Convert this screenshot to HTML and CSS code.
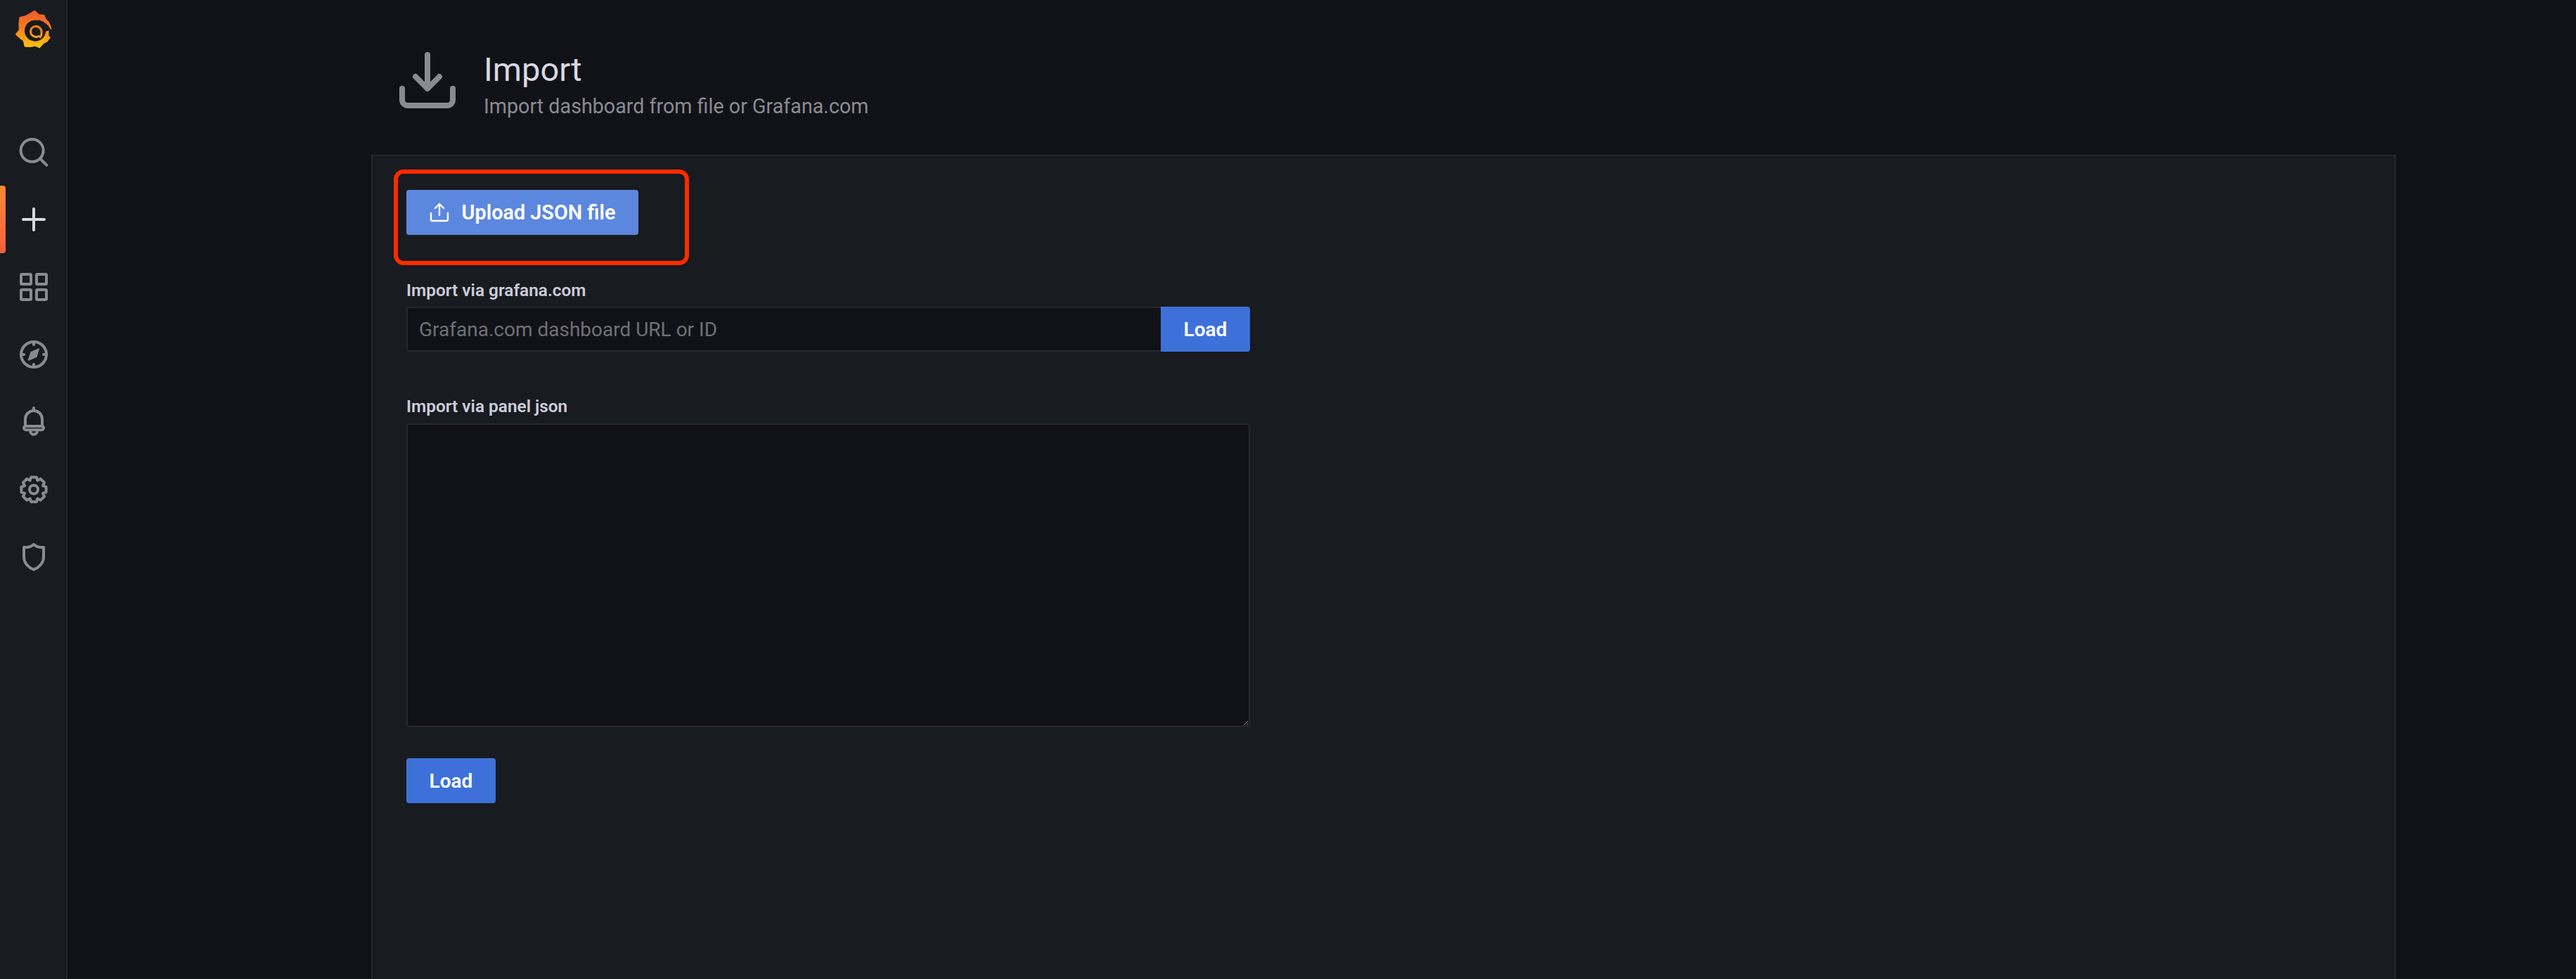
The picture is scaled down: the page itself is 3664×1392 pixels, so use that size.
FILE: index.html
```html
<!DOCTYPE html>
<html lang="en">
<head>
<meta charset="utf-8">
<title>Import</title>
<link rel="stylesheet" href="styles.css">
</head>
<body>
<div class="app">
  <nav class="sidebar">
    <a class="logo">
      <svg class="logo-svg" viewBox="0 0 270 240">
        <defs>
          <linearGradient id="lg" gradientUnits="userSpaceOnUse" x1="0" y1="43" x2="0" y2="206">
            <stop offset="0" stop-color="#f1582c"/>
            <stop offset="0.45" stop-color="#f47c20"/>
            <stop offset="1" stop-color="#fdc70c"/>
          </linearGradient>
        </defs>
        <path fill="url(#lg)" stroke="url(#lg)" stroke-width="6" stroke-linejoin="round" d="M148 47 L166 64 L187 65 L195 84 C207 92 214 106 217 124 L206 128 L205 153 L212 160 L200 176 L185 183 L168 202 L150 194 L130 198 L107 197 L101 172 L84 160 L69 146 L84 128 L82 104 L85 75 L108 70 L126 60 Z"/>
        <circle cx="150" cy="131" r="45" fill="#181b1f"/>
        <path fill="#181b1f" d="M160 85 C184 88 205 104 218 128 L192 134 L180 115 Z"/>
        <path fill="none" stroke="url(#lg)" stroke-width="9" stroke-linecap="round" d="M165 155 C148 162 129 150 131 132 C133 114 155 106 169 118 C180 128 180 146 172 158"/>
      </svg>
    </a>
    <div class="nav-items">
      <a class="nav-item">
        <svg class="icon" viewBox="0 0 24 24"><circle cx="10.8" cy="11" r="8"/><path d="M16.8 17 L21.2 21.4"/></svg>
      </a>
      <a class="nav-item active">
        <svg class="icon icon-light" viewBox="0 0 24 24"><path d="M12 4.5 V19.5 M4.5 12 H19.5"/></svg>
      </a>
      <a class="nav-item">
        <svg class="icon" viewBox="0 0 24 24"><rect x="3" y="3" width="7" height="7" rx="0.6"/><rect x="14" y="3" width="7" height="7" rx="0.6"/><rect x="3" y="14" width="7" height="7" rx="0.6"/><rect x="14" y="14" width="7" height="7" rx="0.6"/></svg>
      </a>
      <a class="nav-item">
        <svg class="icon" viewBox="0 0 24 24"><circle cx="12" cy="12" r="9"/><path d="M12 3 V5 M12 19 V21 M3 12 H5 M19 12 H21"/><path class="solid" d="M15.5 8.2 L13.8 13.6 L8.4 15.9 L10.2 10.4 Z"/></svg>
      </a>
      <a class="nav-item">
        <svg class="icon" viewBox="0 0 24 24"><path d="M6 15 V10 A6 6 0 0 1 18 10 V15"/><path d="M12 2 V4"/><rect x="5" y="15" width="14" height="2.6" rx="1.3"/><path d="M9.6 18.5 A2.4 2.4 0 0 0 14.4 18.5"/></svg>
      </a>
      <a class="nav-item">
        <svg class="icon" viewBox="0 0 24 24"><circle cx="12" cy="12" r="3"/><polygon transform="translate(12 12)" points="1.87,-8.8 2.68,-6.47 4.9,-7.55 7.55,-4.9 6.47,-2.68 8.8,-1.87 8.8,1.87 6.47,2.68 7.55,4.9 4.9,7.55 2.68,6.47 1.87,8.8 -1.87,8.8 -2.68,6.47 -4.9,7.55 -7.55,4.9 -6.47,2.68 -8.8,1.87 -8.8,-1.87 -6.47,-2.68 -7.55,-4.9 -4.9,-7.55 -2.68,-6.47 -1.87,-8.8"/></svg>
      </a>
      <a class="nav-item">
        <svg class="icon" viewBox="0 0 24 24"><path d="M12 3 C10.2 4.6 7.6 5.4 5 5 V12 C5 16.2 8.2 19.4 12 21 C15.8 19.4 19 16.2 19 12 V5 C16.4 5.4 13.8 4.6 12 3 Z"/></svg>
      </a>
    </div>
  </nav>
  <main class="main">
    <header class="page-header">
      <svg class="header-icon" viewBox="0 0 84 84"><path d="M42 6 V54 M25 37 L42 54 L59 37"/><path d="M6 54 V70 A8 8 0 0 0 14 78 H70 A8 8 0 0 0 78 70 V54"/></svg>
      <div class="header-text">
        <h1 class="title">Import</h1>
        <div class="subtitle">Import dashboard from file or Grafana.com</div>
      </div>
    </header>
    <section class="panel">
      <div class="callout"></div>
      <button class="btn btn-upload">
        <svg class="upload-icon" viewBox="0 0 28 28"><path d="M14 2 V18 M8 8 L14 2 L20 8"/><path d="M2 15 V24 A2 2 0 0 0 4 26 H24 A2 2 0 0 0 26 24 V15"/></svg>
        <span class="upload-text">Upload JSON file</span>
      </button>
      <label class="label label-first">Import via grafana.com</label>
      <div class="input-row">
        <input class="input" type="text" placeholder="Grafana.com dashboard URL or ID">
        <button class="btn btn-append">Load</button>
      </div>
      <label class="label label-second">Import via panel json</label>
      <textarea class="textarea"></textarea>
      <button class="btn btn-load">Load</button>
    </section>
  </main>
</div>
</body>
</html>
```
FILE: styles.css
```css
* { box-sizing: border-box; }
html, body { margin: 0; height: 100%; }
body {
  background: #111217;
  color: #ccccdc;
  font-family: Roboto, "Liberation Sans", sans-serif;
  overflow: hidden;
}
.app { display: flex; height: 1392px; }

.sidebar {
  width: 96px;
  flex: none;
  background: #181b1f;
  box-shadow: inset -2px 0 0 #26282c;
  display: flex;
  flex-direction: column;
}
.logo { display: block; height: 168px; }
.logo-svg { display: block; width: 90px; height: 80px; }
.nav-items { display: flex; flex-direction: column; }
.nav-item {
  height: 96px;
  display: flex;
  align-items: center;
  justify-content: center;
  position: relative;
}
.nav-item.active::before {
  content: "";
  position: absolute;
  left: 0;
  top: 0;
  bottom: 0;
  width: 8px;
  border-radius: 0 4px 4px 0;
  background: linear-gradient(#ff8833, #f55f3e);
}
.icon {
  width: 48px;
  height: 48px;
  fill: none;
  stroke: #8a8a93;
  stroke-width: 2;
  stroke-linecap: round;
  stroke-linejoin: round;
}
.icon .solid { fill: #8a8a93; stroke-width: 1; }
.icon-light { stroke: #d8d9e3; }

.main { flex: 1; padding-left: 432px; min-width: 0; }
.page-header {
  height: 220px;
  display: flex;
  align-items: flex-start;
  padding: 72px 0 0 38px;
  gap: 38px;
  width: 2880px;
}
.header-icon {
  width: 84px;
  height: 84px;
  flex: none;
  fill: none;
  stroke: #8a8a93;
  stroke-width: 8;
  stroke-linecap: round;
  stroke-linejoin: round;
}
.title {
  margin: 0;
  font-size: 47px;
  font-weight: 400;
  line-height: 54px;
  color: #d8d9e3;
}
.subtitle {
  font-size: 28.7px;
  line-height: 36px;
  margin-top: 7px;
  color: #8a8b93;
}

.panel {
  position: relative;
  width: 2880px;
  height: 1172px;
  background: #181b1f;
  border: 2px solid #26282c;
  border-bottom: 0;
  padding: 48px 0 0 48px;
}
.callout {
  position: absolute;
  left: 30px;
  top: 19px;
  width: 420px;
  height: 136px;
  border: 6px solid #ff2a00;
  border-radius: 14px;
}
.btn {
  display: flex;
  align-items: center;
  justify-content: center;
  border: 0;
  border-radius: 4px;
  color: #fff;
  font-family: Roboto, "Liberation Sans", sans-serif;
  font-size: 28px;
  font-weight: 600;
  padding: 0;
}
.btn-upload {
  width: 330px;
  height: 64px;
  background: #5c87de;
  gap: 18px;
}
.upload-text { font-size: 28.8px; }
.upload-icon {
  width: 28px;
  height: 28px;
  fill: none;
  stroke: #fff;
  stroke-width: 2.4;
  stroke-linecap: round;
  stroke-linejoin: round;
}
.label {
  display: block;
  font-size: 24.4px;
  font-weight: 600;
  line-height: 32px;
  color: #ccccdc;
}
.label-first { margin-top: 63px; margin-bottom: 7px; }
.label-second { margin-top: 62px; margin-bottom: 8px; }
.input-row { display: flex; width: 1200px; height: 64px; }
.input {
  flex: 1;
  min-width: 0;
  background: #111217;
  border: 2px solid #26282c;
  border-right: 0;
  border-radius: 4px 0 0 4px;
  padding: 0 16px;
  color: #ccccdc;
  font-family: Roboto, "Liberation Sans", sans-serif;
  font-size: 28px;
  outline: none;
}
.input::placeholder { color: #6f7078; opacity: 1; }
.btn-append {
  width: 127px;
  flex: none;
  height: 64px;
  background: #3d71d9;
  border-radius: 0 4px 4px 0;
}
.textarea {
  display: block;
  width: 1200px;
  height: 432px;
  background: #111217;
  border: 2px solid #26282c;
  border-radius: 4px;
  outline: none;
  color: #ccccdc;
}
.btn-load {
  width: 127px;
  height: 64px;
  margin-top: 44px;
  background: #3d71d9;
}
```
